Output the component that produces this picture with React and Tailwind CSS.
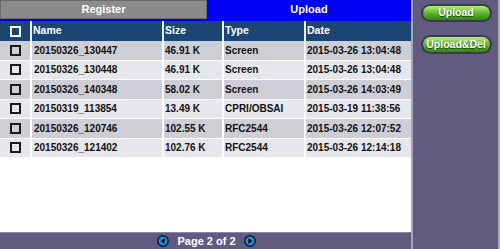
import React from 'react';

const rows = [
  ['20150326_130447', '46.91 K', 'Screen', '2015-03-26 13:04:48'],
  ['20150326_130448', '46.91 K', 'Screen', '2015-03-26 13:04:48'],
  ['20150326_140348', '58.02 K', 'Screen', '2015-03-26 14:03:49'],
  ['20150319_113854', '13.49 K', 'CPRI/OBSAI', '2015-03-19 11:38:56'],
  ['20150326_120746', '102.55 K', 'RFC2544', '2015-03-26 12:07:52'],
  ['20150326_121402', '102.76 K', 'RFC2544', '2015-03-26 12:14:18'],
];

function Box() {
  return <div className="w-[11px] h-[11px] border-2 border-[#1a1a1a]" />;
}

function Arrow({ dir }) {
  return (
    <svg width="12" height="12" viewBox="0 0 12 12">
      <circle cx="6" cy="6" r="5.2" fill="#1d8fe0" stroke="#0a1a30" strokeWidth="1.5" />
      {dir === 'left' ? (
        <polygon points="7.6,3.3 7.6,8.7 3.6,6" fill="#000" />
      ) : (
        <polygon points="4.4,3.3 4.4,8.7 8.4,6" fill="#000" />
      )}
    </svg>
  );
}

function GreenButton({ children, className }) {
  return (
    <div className={`rounded-full p-[2px] bg-[#3a3a4a] ${className}`}>
      <div className="rounded-full h-full flex items-center justify-center text-white font-bold text-[10.5px] bg-gradient-to-b from-[#b6f07a] via-[#5cb82a] to-[#2f8a10] [text-shadow:0_1px_1px_#1a3a05]">
        {children}
      </div>
    </div>
  );
}

export default function App() {
  return (
    <div className="w-[500px] h-[249px] flex bg-[#625b80] overflow-hidden" style={{ fontFamily: '"Liberation Sans", Arial, sans-serif' }}>
      <div className="w-[411px] flex flex-col bg-white">
        <div className="flex h-[19px]">
          <div className="w-[207px] bg-[#8b8b8b] border border-[#6a6a6a] flex items-center justify-center text-white font-bold text-[11px]">Register</div>
          <div className="flex-1 bg-[#0000f2] flex items-center justify-center text-white font-bold text-[11px]">Upload</div>
        </div>
        <div className="h-[2px] bg-[#0000f2]" />
        <div className="flex flex-col text-[10px] font-bold">
          <div className="flex h-[20px] bg-[#1b4572] text-white text-[10.5px]">
            <div className="w-[32px] flex items-center justify-center border-r-2 border-white/90">
              <div className="w-[11px] h-[11px] border-2 border-white" />
            </div>
            <div className="w-[132px] flex items-center pl-[1px] border-r-2 border-white/90">Name</div>
            <div className="w-[60px] flex items-center pl-[1px] border-r-2 border-white/90">Size</div>
            <div className="w-[82px] flex items-center pl-[1px] border-r-2 border-white/90">Type</div>
            <div className="flex-1 flex items-center pl-[1px]">Date</div>
          </div>
          {rows.map((r, i) => (
            <div key={i} className={`flex h-[19.5px] text-[#111] border-b border-white ${i % 2 === 0 ? 'bg-[#cdced6]' : 'bg-[#e5e7ec]'}`}>
              <div className="w-[32px] flex items-center justify-center border-r-2 border-white"><Box /></div>
              <div className="w-[132px] flex items-center pl-[2px] border-r-2 border-white">{r[0]}</div>
              <div className="w-[60px] flex items-center pl-[1px] border-r-2 border-white">{r[1]}</div>
              <div className="w-[82px] flex items-center pl-[1px] border-r-2 border-white">{r[2]}</div>
              <div className="flex-1 flex items-center pl-[1px]">{r[3]}</div>
            </div>
          ))}
        </div>
        <div className="flex-1" />
        <div className="h-[17px] bg-[#625b80] border-t border-[#8c86a6] flex items-center justify-center gap-[8px] text-white font-bold text-[11px] pl-[2px]">
          <Arrow dir="left" />
          <span>Page 2 of 2</span>
          <Arrow dir="right" />
        </div>
      </div>
      <div className="w-[2px] bg-[#a9a4c0]" />
      <div className="flex-1 flex flex-col items-center pt-[4px] gap-[13px] pl-[1px] border-r-2 border-[#a9a4c0]">
        <GreenButton className="w-[71px] h-[18px]">Upload</GreenButton>
        <GreenButton className="w-[71px] h-[19px]">Upload&amp;Del</GreenButton>
      </div>
    </div>
  );
}
